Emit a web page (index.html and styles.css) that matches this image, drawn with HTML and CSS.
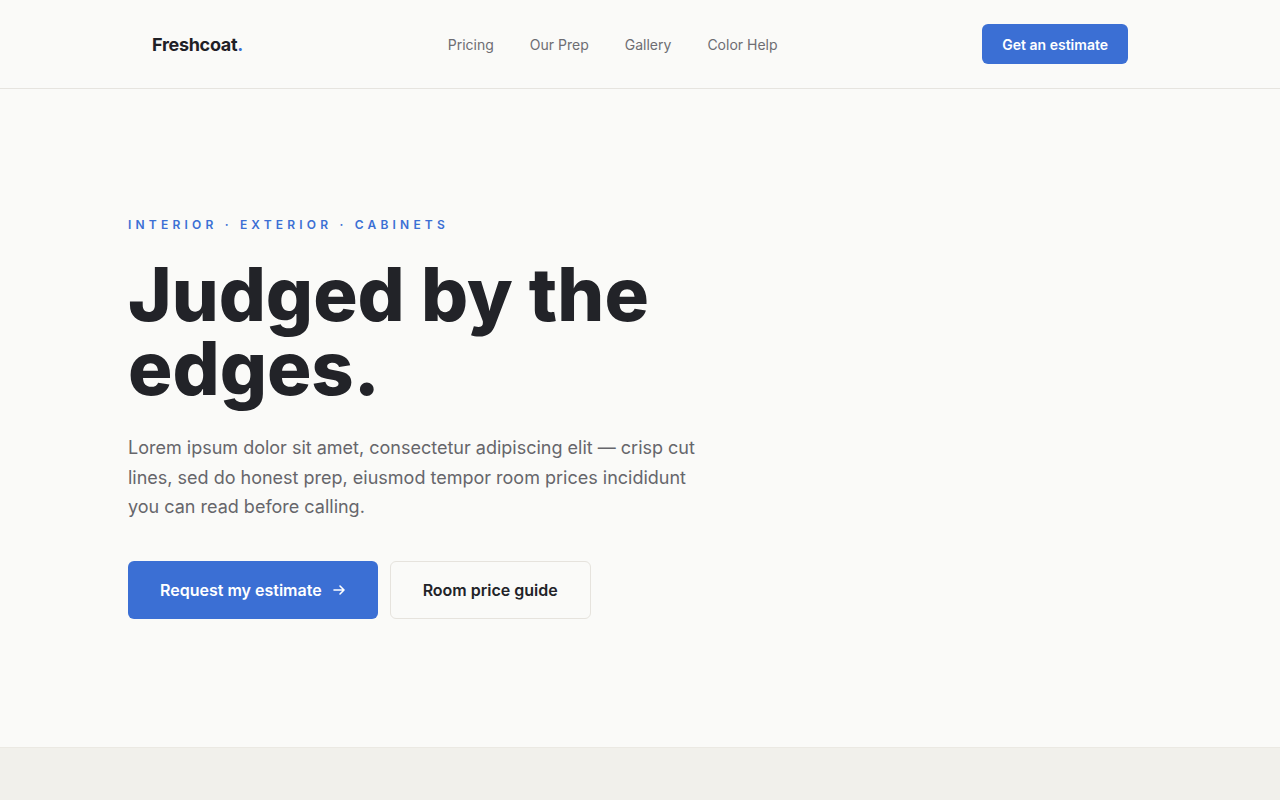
FILE: index.html
```html
<!DOCTYPE html>
<html lang="en">
<head>
    <meta charset="UTF-8">
    <meta name="viewport" content="width=device-width, initial-scale=1.0">
    <title>Freshcoat</title>
    <link rel="stylesheet" href="styles.css">
</head>
<body>

    <!-- 顶部导航 -->
    <header class="topbar">
        <div class="wrap topbar-inner">
            <a class="logo" href="#">Freshcoat<span class="dot">.</span></a>
            <nav class="nav">
                <a href="#">Pricing</a>
                <a href="#">Our Prep</a>
                <a href="#">Gallery</a>
                <a href="#">Color Help</a>
            </nav>
            <a class="btn btn-small" href="#">Get an estimate</a>
        </div>
    </header>

    <!-- 首屏 -->
    <section class="hero">
        <div class="wrap">
            <p class="eyebrow">Interior · Exterior · Cabinets</p>
            <h1>Judged by the edges.</h1>
            <p class="lead">Lorem ipsum dolor sit amet, consectetur adipiscing elit — crisp cut lines, sed do honest prep, eiusmod tempor room prices incididunt you can read before calling.</p>
            <div class="actions">
                <a class="btn btn-big" href="#">Request my estimate
                    <svg class="arrow" width="14" height="14" viewBox="0 0 14 14" fill="none" stroke="currentColor" stroke-width="1.6" stroke-linecap="round" stroke-linejoin="round">
                        <path d="M2 7h10M8 3l4 4-4 4"/>
                    </svg>
                </a>
                <a class="btn btn-ghost" href="#">Room price guide</a>
            </div>
        </div>
    </section>

    <!-- 下一段 -->
    <section class="next"></section>

</body>
</html>
```

FILE: styles.css
```css
* {
    margin: 0;
    padding: 0;
    box-sizing: border-box;
}
body {
    font-family: Inter, "Liberation Sans", sans-serif;
    background-color: #fafaf8;
    color: #222328;
}
a {
    text-decoration: none;
    color: inherit;
}
.wrap {
    width: 1024px;
    margin: 0 auto;
}
.topbar {
    height: 89px;
    border-bottom: 1px solid #e6e4df;
}
.topbar-inner {
    height: 88px;
    padding: 0 24px;
    display: flex;
    align-items: center;
    justify-content: space-between;
}
.logo {
    font-size: 18px;
    font-weight: 700;
    letter-spacing: -0.3px;
    color: #1f2026;
}
.logo .dot {
    color: #3b6fd4;
}
.nav {
    display: flex;
    gap: 36px;
}
.nav a {
    font-size: 14px;
    color: #6d6d72;
}
.btn {
    display: inline-flex;
    align-items: center;
    justify-content: center;
    background-color: #3b6fd4;
    color: white;
    font-weight: 600;
    border-radius: 6px;
}
.btn-small {
    height: 40px;
    padding: 0 20px;
    font-size: 14px;
}
.hero {
    padding: 128px 0;
    height: 658px;
}
.eyebrow {
    font-size: 12px;
    font-weight: 600;
    letter-spacing: 0.35em;
    text-transform: uppercase;
    color: #3b6fd4;
    line-height: 16px;
    margin-bottom: 24px;
}
.hero h1 {
    font-size: 74px;
    font-weight: 800;
    line-height: 74px;
    letter-spacing: 0;
    width: 600px;
    color: #222328;
    margin-bottom: 28px;
}
.lead {
    font-size: 18px;
    line-height: 29.5px;
    color: #66666b;
    width: 580px;
    margin-bottom: 39px;
}
.actions {
    display: flex;
    gap: 12px;
}
.btn-big {
    height: 58px;
    padding: 0 32px;
    font-size: 16px;
    gap: 10px;
}
.btn-ghost {
    height: 58px;
    padding: 0 32px;
    font-size: 16px;
    background-color: transparent;
    color: #222328;
    border: 1px solid #e6e3dd;
}
.next {
    background-color: #f1f0eb;
    border-top: 1px solid #ebe9e3;
    height: 200px;
}
```
